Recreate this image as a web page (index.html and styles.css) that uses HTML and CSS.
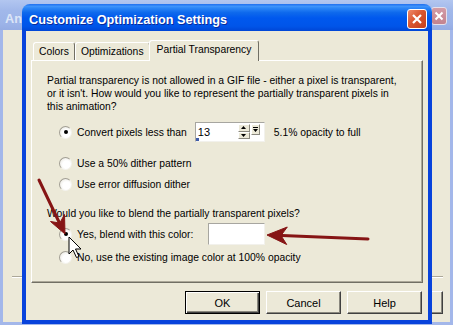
FILE: index.html
```html
<!DOCTYPE html>
<html lang="en">
<head>
    <meta charset="UTF-8">
    <title>Customize Optimization Settings</title>
    <link rel="stylesheet" href="styles.css">
</head>
<body>
    <!-- window behind the dialog -->
    <div class="back-window">
        <div class="back-title">
            <span class="back-caption">An</span>
            <span class="back-close">
                <svg width="10" height="10" viewBox="0 0 10 10"><path d="M1.5 1.5 L8.5 8.5 M8.5 1.5 L1.5 8.5" stroke="#fff" stroke-width="2"/></svg>
            </span>
        </div>
        <div class="back-body">
            <div class="back-sep"></div>
            <div class="back-buttons"><div class="btn"></div></div>
        </div>
    </div>

    <div class="dialog">
        <div class="title-bar">
            <span class="title-text">Customize Optimization Settings</span>
            <span class="close-btn">
                <svg width="12" height="12" viewBox="0 0 12 12"><path d="M2 2 L10 10 M10 2 L2 10" stroke="#fff" stroke-width="2.2"/></svg>
            </span>
        </div>
        <div class="dialog-body">
            <div class="tabs">
                <div class="tab">Colors</div>
                <div class="tab">Optimizations</div>
                <div class="tab tab-active">Partial Transparency</div>
            </div>
            <div class="panel">
                <p class="intro">Partial transparency is not allowed in a GIF file - either a pixel is transparent,<br>or it isn't. How would you like to represent the partially transparent pixels in<br>this animation?</p>

                <div class="option opt-convert">
                    <span class="radio checked"></span>
                    <span>Convert pixels less than</span>
                    <div class="spin">
                        <span class="spin-value">13</span>
                        <span class="spin-arrows">
                            <span class="spin-btn"><svg width="5" height="3" viewBox="0 0 5 3"><path d="M2.5 0 L5 3 L0 3 Z"/></svg></span>
                            <span class="spin-btn"><svg width="5" height="3" viewBox="0 0 5 3"><path d="M0 0 L5 0 L2.5 3 Z"/></svg></span>
                        </span>
                        <span class="spin-drop"><svg width="5" height="6" viewBox="0 0 5 6"><path d="M0 0 H5 V1 H0 Z M0 2 L5 2 L2.5 5 Z"/></svg></span>
                        <span class="spin-mark"></span>
                    </div>
                    <span class="after">5.1% opacity to full</span>
                </div>
                <div class="option opt-dither">
                    <span class="radio"></span>
                    <span>Use a 50% dither pattern</span>
                </div>
                <div class="option opt-diffusion">
                    <span class="radio"></span>
                    <span>Use error diffusion dither</span>
                </div>

                <p class="question">Would you like to blend the partially transparent pixels?</p>
                <div class="option opt-yes">
                    <span class="radio checked"></span>
                    <span>Yes, blend with this color:</span>
                    <span class="color-box"></span>
                </div>
                <div class="option opt-no">
                    <span class="radio"></span>
                    <span>No, use the existing image color at 100% opacity</span>
                </div>
            </div>
            <div class="buttons">
                <div class="btn btn-default">OK</div>
                <div class="btn">Cancel</div>
                <div class="btn">Help</div>
            </div>
        </div>
    </div>

    <!-- annotation arrows and mouse pointer -->
    <svg class="overlay" width="453" height="325" viewBox="0 0 453 325">
        <g fill="#861515" stroke="#861515">
            <path d="M39 180 L59 222" stroke-width="3" stroke-linecap="round" fill="none"/>
            <polygon points="65,234 64.5,214.5 59.8,223 50.5,221.5" stroke-width="1" stroke-linejoin="round"/>
            <path d="M368 239 L282 235.6" stroke-width="3" stroke-linecap="round" fill="none"/>
            <polygon points="267,235 287.3,227 281,235.5 286.7,244.5" stroke-width="1" stroke-linejoin="round"/>
        </g>
        <path d="M69 237 L69 254 L73 250 L76.5 257.5 L79 256.5 L75.5 249 L81 249 Z" fill="#fff" stroke="#000" stroke-width="1" stroke-linejoin="round"/>
    </svg>
</body>
</html>
```

FILE: styles.css
```css
* {
    box-sizing: border-box;
}

body {
    margin: 0;
    width: 453px;
    height: 325px;
    overflow: hidden;
    position: relative;
    background: #ECE9D8;
    font-family: "Liberation Sans", Arial, sans-serif;
    font-size: 10.35px;
    color: #000;
}

/* window in the background */
.back-window {
    position: absolute;
    left: 0;
    top: 0;
    width: 453px;
    height: 325px;
    display: flex;
    flex-direction: column;
    border: 3px solid #A3B7EA;
    border-top: 0;
    background: #ECE9D8;
}

.back-title {
    height: 30px;
    flex: none;
    display: flex;
    justify-content: space-between;
    align-items: flex-start;
    margin: 0 -3px;
    padding: 7px 6px 0 5px;
    background: linear-gradient(#B2C6F0, #A1B8EA 35%, #9CB3E8 80%, #95ACE3);
}

.back-caption {
    margin-top: 4px;
    font-size: 12.7px;
    font-weight: bold;
    line-height: 16px;
    color: #DCE5F7;
}

.back-close {
    width: 16px;
    height: 18px;
    display: flex;
    align-items: center;
    justify-content: center;
    border: 1px solid #E6E0EA;
    border-radius: 3px;
    background: linear-gradient(#D49CA6, #C3838F);
}

.back-body {
    flex: 1;
    display: flex;
    flex-direction: column;
    justify-content: flex-end;
    padding: 0 7px 8px 9px;
}

.back-sep {
    height: 2px;
    margin-bottom: 13px;
    border-top: 1px solid #ACA899;
    border-bottom: 1px solid #fff;
}

.back-buttons {
    display: flex;
    justify-content: flex-end;
}

/* the dialog */
.dialog {
    position: absolute;
    left: 22px;
    top: 4px;
    width: 410px;
    height: 320px;
    display: flex;
    flex-direction: column;
    border-radius: 8px 8px 0 0;
    overflow: hidden;
}

.title-bar {
    height: 27px;
    flex: none;
    display: flex;
    justify-content: space-between;
    align-items: flex-start;
    padding: 5px 5px 0 7px;
    background: linear-gradient(#1F6FEF 0%, #3D93FB 9%, #2A84F6 16%, #0E69EC 32%, #0058EE 52%, #0055E9 82%, #0046D6 100%);
}

.title-text {
    margin-top: 3px;
    font-size: 12.7px;
    font-weight: bold;
    line-height: 16px;
    color: #fff;
    text-shadow: 1px 1px #0A2A9A;
}

.close-btn {
    width: 20px;
    height: 20px;
    display: flex;
    align-items: center;
    justify-content: center;
    border: 1px solid #fff;
    border-radius: 3px;
    background: linear-gradient(135deg, #EE8A6A, #DA5630 45%, #C23E1B);
}

.dialog-body {
    flex: 1;
    display: flex;
    flex-direction: column;
    padding: 9px 5px 0;
    border: 4px solid #0843DC;
    border-top: 0;
    background: #ECE9D8;
}

.tabs {
    display: flex;
    align-items: flex-end;
    height: 20px;
    padding-left: 2px;
}

.tab {
    height: 18px;
    padding: 0 5px;
    line-height: 18px;
    border: 1px solid #fff;
    border-right-color: #716F64;
    border-bottom: 0;
    border-radius: 3px 3px 0 0;
    background: #ECE9D8;
}

.tab-active {
    position: relative;
    z-index: 1;
    height: 21px;
    margin-bottom: -1px;
    margin-left: -1px;
    padding: 0 7px;
    line-height: 18px;
}

.panel {
    height: 223px;
    flex: none;
    padding-top: 13px;
    border: 1px solid;
    border-color: #fff #716F64 #716F64 #fff;
    box-shadow: inset -1px -1px #ACA899;
}

.intro,
.question {
    margin: 0;
    padding: 0 15px;
    line-height: 13px;
}

.question {
    margin-top: 15px;
}

.option {
    display: flex;
    align-items: center;
    height: 16px;
    padding-left: 27px;
}

.opt-convert {
    height: 20px;
    margin-top: 9px;
}

.opt-dither {
    margin-top: 13px;
}

.opt-diffusion {
    margin-top: 5px;
}

.opt-yes {
    height: 22px;
    margin-top: 3px;
}

.opt-no {
    margin-top: 4px;
}

.radio {
    width: 13px;
    height: 13px;
    flex: none;
    margin-right: 5px;
    border-radius: 50%;
    border: 1px solid;
    border-color: #A29F94 #F4F3EE #F4F3EE #A29F94;
    background: radial-gradient(circle at 60% 60%, #fff 40%, #E4E2D8);
    display: flex;
    align-items: center;
    justify-content: center;
}

.radio.checked::after {
    content: "";
    width: 4px;
    height: 4px;
    border-radius: 50%;
    background: #000;
}

.spin {
    position: relative;
    width: 70px;
    height: 20px;
    margin-left: 8px;
    display: flex;
    align-items: flex-start;
    padding: 1px 4px 0 2px;
    border: 1px solid;
    border-color: #A7A6A0 #F2F1EC #F2F1EC #A7A6A0;
    background: #fff;
}

.spin-value {
    flex: 1;
    line-height: 16px;
    font-size: 11px;
}

.spin-arrows {
    width: 12px;
    height: 15px;
    display: flex;
    flex-direction: column;
}

.spin-btn,
.spin-drop {
    display: flex;
    align-items: center;
    justify-content: center;
    border: 1px solid;
    border-color: #fff #8A887E #8A887E #fff;
    background: #ECE9D8;
}

.spin-btn {
    flex: 1;
}

.spin-drop {
    width: 9px;
    height: 11px;
    margin-left: 1px;
}

.spin-mark {
    position: absolute;
    left: 0;
    bottom: 0;
    width: 3px;
    height: 3px;
    background: #3F5DAA;
}

.after {
    margin-left: 9px;
}

.color-box {
    width: 57px;
    height: 22px;
    margin-left: 15px;
    border: 1px solid;
    border-color: #A7A6A0 #F2F1EC #F2F1EC #A7A6A0;
    background: #fff;
}

.buttons {
    display: flex;
    justify-content: flex-end;
    gap: 6px;
    margin-top: 8px;
    padding-right: 1px;
}

.btn {
    width: 75px;
    height: 23px;
    display: flex;
    align-items: center;
    justify-content: center;
    font-size: 11px;
    border: 1px solid;
    border-color: #fff #404040 #404040 #fff;
    box-shadow: inset -1px -1px #8A887E;
    background: #ECE9D8;
}

.btn-default {
    border-color: #000;
    box-shadow: inset 1px 1px #fff, inset -1px -1px #404040, inset -2px -2px #8A887E;
}

.overlay {
    position: absolute;
    left: 0;
    top: 0;
    pointer-events: none;
}
```
